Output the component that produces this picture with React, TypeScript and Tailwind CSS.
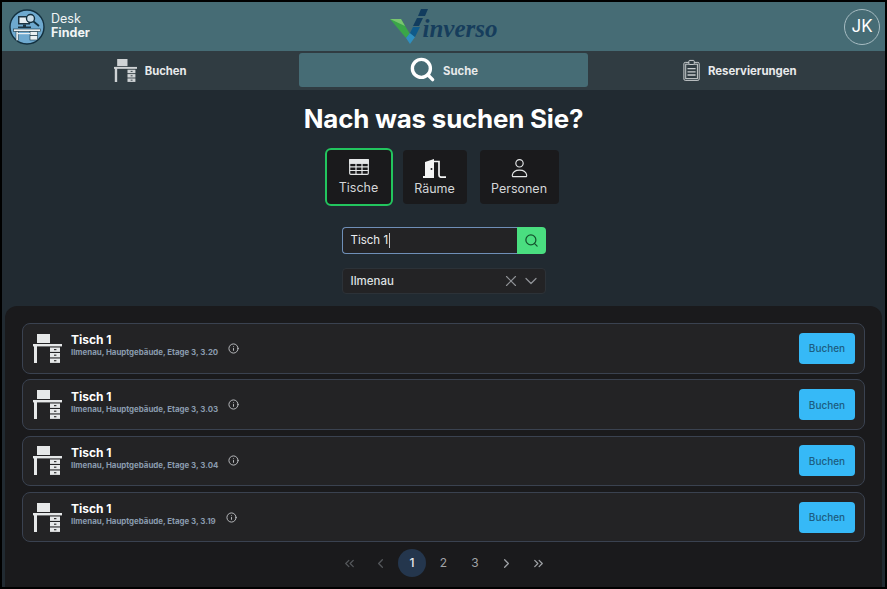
import React from "react";
import { Search, X, ChevronDown, ChevronLeft, ChevronRight, ChevronsLeft, ChevronsRight, Info } from "lucide-react";

function DeskIcon({ className, color = "#d7dbdc", hole = "#444" }: { className?: string; color?: string; hole?: string }) {
  return (
    <svg viewBox="0 0 29 29" className={className} fill="none">
      <rect x="4" y="0" width="13" height="9" fill={color} />
      <rect x="0" y="10" width="29" height="2.4" fill={color} />
      <rect x="1" y="10" width="3" height="19" fill={color} />
      <rect x="17" y="13.5" width="10" height="4.4" fill={color} />
      <rect x="17" y="19" width="10" height="4.4" fill={color} />
      <rect x="17" y="24.5" width="10" height="4.4" fill={color} />
      <rect x="21" y="15" width="2.4" height="1.2" fill={hole} />
      <rect x="21" y="20.6" width="2.4" height="1.2" fill={hole} />
      <rect x="21" y="26.1" width="2.4" height="1.2" fill={hole} />
    </svg>
  );
}

function AppLogo() {
  return (
    <svg viewBox="0 0 36 36" className="w-[36px] h-[36px] shrink-0">
      <circle cx="18" cy="18" r="17" fill="#6ea9cf" stroke="#13303f" strokeWidth="1.4" />
      <rect x="9" y="7" width="12" height="8.5" fill="#1c3443" />
      <rect x="10.5" y="8.5" width="9" height="5.5" fill="#e7eef2" />
      <rect x="14" y="15.5" width="3" height="2.5" fill="#1c3443" />
      <rect x="9" y="17.5" width="13" height="1.6" fill="#1c3443" />
      <circle cx="21.5" cy="9.5" r="4" fill="#c9dce8" stroke="#13303f" strokeWidth="1.4" />
      <path d="M24.5 12.5 L30 17" stroke="#13303f" strokeWidth="1.8" />
      <rect x="4.5" y="20" width="27" height="2.6" fill="#e9eff2" stroke="#13303f" strokeWidth="0.6" />
      <rect x="7" y="22.5" width="2.2" height="9" fill="#e9eff2" stroke="#13303f" strokeWidth="0.5" />
      <rect x="21" y="22.5" width="7.5" height="8.5" fill="#e9eff2" stroke="#13303f" strokeWidth="0.6" />
      <path d="M21 26.5 H28.5" stroke="#13303f" strokeWidth="0.8" />
      <rect x="9" y="24" width="12" height="1.2" fill="#e9eff2" />
    </svg>
  );
}

function InversoMark() {
  return (
    <svg viewBox="0 0 38 36" className="w-[38px] h-[36px] shrink-0">
      <path d="M0 10 H11 L20 25 L16 29 Z" fill="#3aa648" />
      <path d="M0 10 H11 L15 17 Z" fill="#79c56f" />
      <path d="M16 29 L20 24 L25 28 L20 35 Z" fill="#2f8fc0" />
      <path d="M20 24 L23 18 L30 18 L25 28 Z" fill="#0f5a8a" />
      <path d="M23 17 L27 9 L33 9 L29 17 Z" fill="#123c5e" />
      <path d="M28 7 L31 0 L38 0 L35 7 Z" fill="#123c5e" />
    </svg>
  );
}

function ClipboardIcon() {
  return (
    <svg viewBox="0 0 20 24" className="w-[18px] h-[23px]" fill="none" stroke="#c9cdcf" strokeWidth="1.1">
      <rect x="1" y="3" width="17" height="20" rx="1.5" />
      <rect x="3" y="5" width="13" height="16" />
      <rect x="6.5" y="0.8" width="6" height="4.5" rx="1" fill="#303c42" />
      <path d="M5 10 H14 M5 13.5 H14 M5 17 H14" strokeWidth="1.4" />
    </svg>
  );
}

function TableIcon() {
  return (
    <svg viewBox="0 0 20 16" className="w-[20px] h-[16px]" fill="none" stroke="#e5e7e8" strokeWidth="1.2">
      <rect x="0.7" y="0.7" width="18.6" height="14.6" rx="1" />
      <rect x="0.7" y="0.7" width="18.6" height="3.6" fill="#e5e7e8" />
      <path d="M0.7 7.8 H19.3 M0.7 11.5 H19.3 M7 4.3 V15.3 M13 4.3 V15.3" />
    </svg>
  );
}

function DoorIcon() {
  return (
    <svg viewBox="0 0 23 19" className="w-[23px] h-[19px]">
      <path d="M0 19 V17 H2 V3 L11 0 V19 Z" fill="#f4f5f5" />
      <circle cx="8.5" cy="10" r="1" fill="#1a1b1e" />
      <path d="M11 2.5 H16 V16 Q16 18.2 18.2 18.2 H23" fill="none" stroke="#f4f5f5" strokeWidth="1.7" />
    </svg>
  );
}

function PersonIcon() {
  return (
    <svg viewBox="0 0 18 20" className="w-[17px] h-[20px]" fill="none" stroke="#e5e7e8" strokeWidth="1.2">
      <circle cx="9" cy="5" r="3.9" />
      <path d="M2.5 19.2 H15.5 Q16.8 19.2 16.6 17.6 Q15.8 12.2 9 12.2 Q2.2 12.2 1.4 17.6 Q1.2 19.2 2.5 19.2 Z" />
    </svg>
  );
}

const rows = ["3.20", "3.03", "3.04", "3.19"];

function ResultCard({ room, infoClass }: { room: string; infoClass: string }) {
  return (
    <div className="flex items-center h-[50.5px] rounded-lg border border-[#3a4250] bg-[#232325] pl-[10px] pr-[9px]">
      <DeskIcon className="w-[29px] h-[29px] shrink-0" color="#e6e8e9" hole="#333" />
      <div className="ml-[9px] flex flex-col pb-[5px]">
        <span className="text-[12px] leading-[14px] font-bold text-white">Tisch 1</span>
        <span className="text-[7.9px] leading-[11px] font-bold text-[#8a9bae]">Ilmenau, Hauptgebäude, Etage 3, {room}</span>
      </div>
      <Info className={`w-[11px] h-[11px] text-[#c3c5c8] ${infoClass}`} strokeWidth={2} />
      <button className="ml-auto w-[56px] h-[31px] rounded-[4px] bg-[#36b9f7] pt-px text-[10px] font-medium text-[#1c5c80]">Buchen</button>
    </div>
  );
}

export default function App() {
  return (
    <div className="w-[887px] h-[589px] bg-black border-2 border-black flex flex-col overflow-hidden font-['Inter',sans-serif]">
      <header className="h-[49px] shrink-0 bg-[#466c75] flex items-center justify-between pl-[7px] pr-[5px]">
        <div className="flex items-center gap-[6px] w-[200px]">
          <AppLogo />
          <div className="flex flex-col text-[12.5px] leading-[14px] text-[#f0f4f5] -mt-[2px]">
            <span>Desk</span>
            <span className="font-bold">Finder</span>
          </div>
        </div>
        <div className="flex items-center mt-[1px] -ml-[2px]">
          <InversoMark />
          <span className="font-['Liberation_Serif',serif] italic font-bold text-[25px] leading-[25px] text-[#163d5c] -ml-[5px] mt-[3px]">inverso</span>
        </div>
        <div className="w-[200px] flex justify-end">
          <div className="w-[36px] h-[36px] rounded-full border border-[#a7bcc2] flex items-center justify-center text-[17px] text-white">JK</div>
        </div>
      </header>
      <nav className="h-[39px] shrink-0 bg-[#303c42] grid grid-cols-3 items-center px-0">
        <div className="flex items-center justify-center gap-[8px] ml-[2px]">
          <DeskIcon className="w-[23px] h-[23px]" color="#cfd3d5" hole="#303c42" />
          <span className="text-[11.3px] font-bold text-[#e8eaeb] mt-[1px]">Buchen</span>
        </div>
        <div className="mx-[3px] h-[34px] -mt-[2px] rounded-[3px] bg-[#466c75] flex items-center justify-center gap-[7px]">
          <Search className="w-[27px] h-[27px] text-white" strokeWidth={3} />
          <span className="text-[11.3px] font-bold text-[#e8eaeb] mt-[3px]">Suche</span>
        </div>
        <div className="flex items-center justify-center gap-[7px] ml-[4px]">
          <ClipboardIcon />
          <span className="text-[11.4px] font-bold text-[#e8eaeb] mt-[2px]">Reservierungen</span>
        </div>
      </nav>
      <main className="flex-1 bg-[#212a31] flex flex-col items-center min-h-0">
        <h1 className="mt-[13px] text-[25.9px] leading-[32px] font-bold text-white tracking-[-0.2px]">Nach was suchen Sie?</h1>
        <div className="mt-[13px] h-[58px] flex items-center gap-[10px] -ml-[4px]">
          <div className="w-[68px] h-[58px] rounded-[6px] border-2 border-[#22c55e] bg-[#1a1a1c] flex flex-col items-center justify-center gap-[5px]">
            <TableIcon />
            <span className="text-[12.5px] leading-[15px] text-[#d4d6d8]">Tische</span>
          </div>
          <div className="w-[64px] h-[54px] rounded-[4px] bg-[#1a1a1c] flex flex-col items-center justify-center gap-[3px]">
            <DoorIcon />
            <span className="text-[12.5px] leading-[15px] text-[#d4d6d8]">Räume</span>
          </div>
          <div className="ml-[3px] w-[79px] h-[54px] rounded-[4px] bg-[#1a1a1c] flex flex-col items-center justify-center gap-[3px]">
            <PersonIcon />
            <span className="text-[12.5px] leading-[15px] text-[#d4d6d8]">Personen</span>
          </div>
        </div>
        <div className="mt-[21px] flex w-[204px] h-[27px]">
          <div className="flex-1 rounded-l-[4px] border border-[#6f8fb8] border-r-0 bg-[#232325] flex items-center pl-[8px] text-[11.5px] text-[#eceef0]">
            Tisch 1<span className="w-px h-[15px] bg-[#c9ccd0] ml-[1px]" />
          </div>
          <div className="w-[29px] rounded-r-[4px] bg-[#4ade80] flex items-center justify-center">
            <Search className="w-[15px] h-[15px] text-[#14532d]" strokeWidth={2} />
          </div>
        </div>
        <div className="mt-[14px] w-[204px] h-[26px] rounded-[4px] border border-[#2c3238] bg-[#232325] flex items-center pl-[8px] pr-[4px] text-[11.5px] font-medium text-[#dfe1e3]">
          <span className="flex-1 mt-[1px]">Ilmenau</span>
          <X className="w-[18px] h-[18px] text-[#8f9296]" strokeWidth={1.5} />
          <ChevronDown className="w-[20px] h-[20px] text-[#8f9296] ml-[1px]" strokeWidth={1.5} />
        </div>
        <section className="mt-[12px] flex-1 self-stretch ml-[3px] mr-[3px] rounded-t-[12px] bg-[#1a1a1c] px-[17px] pt-[17px] min-h-0">
          <div className="flex flex-col gap-[5.8px]">
            <ResultCard room={rows[0]} infoClass="ml-[10px]" />
            <ResultCard room={rows[1]} infoClass="ml-[10px]" />
            <ResultCard room={rows[2]} infoClass="ml-[10px]" />
            <ResultCard room={rows[3]} infoClass="ml-[10px]" />
          </div>
          <div className="mt-[7px] flex items-center justify-center text-[12px] text-[#a0a3a7]">
            <span className="w-[31.5px] h-[28px] flex items-center justify-center"><ChevronsLeft className="w-[15px] h-[15px] text-[#55585c]" /></span>
            <span className="w-[31.5px] h-[28px] flex items-center justify-center"><ChevronLeft className="w-[15px] h-[15px] text-[#55585c]" /></span>
            <span className="w-[31.5px] h-[28px] flex items-center justify-center"><span className="w-[28px] h-[28px] rounded-full bg-[#24364d] text-[#e8eaec] font-medium flex items-center justify-center">1</span></span>
            <span className="w-[31.5px] h-[28px] flex items-center justify-center">2</span>
            <span className="w-[31.5px] h-[28px] flex items-center justify-center">3</span>
            <span className="w-[31.5px] h-[28px] flex items-center justify-center"><ChevronRight className="w-[15px] h-[15px]" /></span>
            <span className="w-[31.5px] h-[28px] flex items-center justify-center"><ChevronsRight className="w-[15px] h-[15px]" /></span>
          </div>
        </section>
      </main>
    </div>
  );
}
